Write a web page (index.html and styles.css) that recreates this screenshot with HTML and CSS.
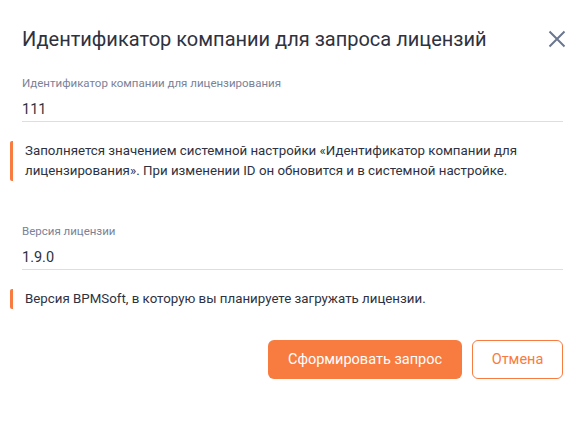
FILE: index.html
```html
<!DOCTYPE html>
<html lang="ru">
  <head>
    <meta charset="UTF-8" />
    <title>Идентификатор компании</title>
    <link rel="stylesheet" href="styles.css">
  </head>
  <body>
    <div class="dialog">
      <div class="dialog-header">
        <h1>Идентификатор компании для запроса лицензий</h1>
        <button class="close" aria-label="Закрыть">
          <svg width="18" height="18" viewBox="0 0 18 18">
            <path d="M1.5 1.5 L16.5 16.5 M16.5 1.5 L1.5 16.5" stroke="#6b7791" stroke-width="2" fill="none" />
          </svg>
        </button>
      </div>

      <div class="field">
        <label>Идентификатор компании для лицензирования</label>
        <div class="value">111</div>
      </div>
      <div class="hint">
        Заполняется значением системной настройки «Идентификатор компании для
        лицензирования». При изменении ID он обновится и в системной настройке.
      </div>

      <div class="field second">
        <label>Версия лицензии</label>
        <div class="value">1.9.0</div>
      </div>
      <div class="hint">
        Версия BPMSoft, в которую вы планируете загружать лицензии.
      </div>

      <div class="actions">
        <button class="btn primary">Сформировать запрос</button>
        <button class="btn secondary">Отмена</button>
      </div>
    </div>
  </body>
</html>
```

FILE: styles.css
```css
body {
  margin: 0;
  padding: 0;
  background-color: #fff;
  font-family: Roboto, sans-serif;
  color: #33363f;
}

.dialog {
  padding: 24px 24px 0 22px;
}

.dialog-header {
  display: flex;
  justify-content: space-between;
  align-items: center;
  height: 30px;
}

h1 {
  margin: 0;
  font-size: 20px;
  font-weight: 400;
  color: #2e3240;
}

.close {
  border: none;
  background: none;
  padding: 0;
  width: 18px;
  height: 18px;
  margin-right: -3px;
  cursor: pointer;
}

.field {
  margin-top: 22px;
  border-bottom: 1px solid #dcdee6;
}

.field.second {
  margin-top: 43px;
}

.field label {
  display: block;
  font-size: 11.5px;
  line-height: 14px;
  color: #7b8297;
}

.value {
  font-size: 14.5px;
  line-height: 20px;
  padding: 10px 0 1px;
  color: #2e3240;
}

.hint {
  margin-top: 19px;
  margin-left: -12px;
  padding-left: 12px;
  border-left: 3px solid #f87b3f;
  border-radius: 2px;
  font-size: 13.3px;
  line-height: 20px;
  color: #2e3240;
}

.actions {
  display: flex;
  justify-content: flex-end;
  gap: 10px;
  margin-top: 31px;
}

.btn {
  font-family: Roboto, sans-serif;
  font-size: 14.5px;
  height: 39px;
  border-radius: 6px;
  cursor: pointer;
}

.primary {
  width: 194px;
  border: none;
  background-color: #f87b3f;
  color: #fff;
}

.secondary {
  width: 91px;
  border: 1px solid #f87b3f;
  background-color: #fff;
  color: #f87b3f;
}
```
